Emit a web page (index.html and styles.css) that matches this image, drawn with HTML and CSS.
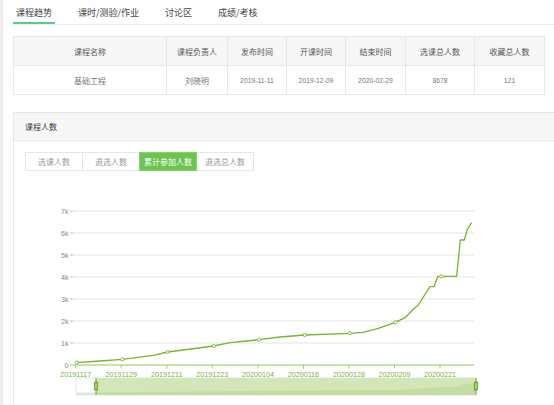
FILE: index.html
```html
<!DOCTYPE html>
<html lang="zh-CN">
  <head>
    <meta charset="UTF-8" />
    <meta name="viewport" content="width=device-width, initial-scale=1.0" />
    <title>课程趋势</title>
    <link rel="stylesheet" href="styles.css">
  </head>
  <body>
    <div class="page">
      <!-- tabs -->
      <div class="tabs">
        <span class="tab active">课程趋势</span>
        <span class="tab">课时/测验/作业</span>
        <span class="tab">讨论区</span>
        <span class="tab">成绩/考核</span>
      </div>

      <!-- course info -->
      <table class="info">
        <colgroup>
          <col style="width:153px">
          <col style="width:61px">
          <col style="width:59px">
          <col style="width:59px">
          <col style="width:60px">
          <col style="width:69px">
          <col style="width:70px">
        </colgroup>
        <tr>
          <th>课程名称</th>
          <th>课程负责人</th>
          <th>发布时间</th>
          <th>开课时间</th>
          <th>结束时间</th>
          <th>选课总人数</th>
          <th>收藏总人数</th>
        </tr>
        <tr>
          <td>基础工程</td>
          <td>刘晓明</td>
          <td class="num">2019-11-11</td>
          <td class="num">2019-12-09</td>
          <td class="num">2020-02-29</td>
          <td class="num">8678</td>
          <td class="num">121</td>
        </tr>
      </table>

      <!-- chart card -->
      <div class="card">
        <div class="card-head">课程人数</div>
        <div class="card-body">
          <div class="btn-group">
            <span class="btn">选课人数</span>
            <span class="btn">退选人数</span>
            <span class="btn active">累计参加人数</span>
            <span class="btn">退选总人数</span>
          </div>

          <svg class="chart" width="500" height="234" viewBox="25 170 500 234">
            <g class="grid">
              <line x1="73" y1="210" x2="474" y2="210" />
              <line x1="73" y1="232" x2="474" y2="232" />
              <line x1="73" y1="254" x2="474" y2="254" />
              <line x1="73" y1="276" x2="474" y2="276" />
              <line x1="73" y1="298" x2="474" y2="298" />
              <line x1="73" y1="320" x2="474" y2="320" />
              <line x1="73" y1="342" x2="474" y2="342" />
            </g>
            <g class="y-tick">
              <line x1="70" y1="210" x2="73" y2="210" />
              <line x1="70" y1="232" x2="73" y2="232" />
              <line x1="70" y1="254" x2="73" y2="254" />
              <line x1="70" y1="276" x2="73" y2="276" />
              <line x1="70" y1="298" x2="73" y2="298" />
              <line x1="70" y1="320" x2="73" y2="320" />
              <line x1="70" y1="342" x2="73" y2="342" />
              <line x1="70" y1="364" x2="73" y2="364" />
            </g>
            <g class="y-label">
              <text x="68.5" y="212.6">7k</text>
              <text x="68.5" y="234.6">6k</text>
              <text x="68.5" y="256.6">5k</text>
              <text x="68.5" y="278.6">4k</text>
              <text x="68.5" y="300.6">3k</text>
              <text x="68.5" y="322.6">2k</text>
              <text x="68.5" y="344.6">1k</text>
              <text x="68.5" y="366.6">0</text>
            </g>

            <line class="x-axis" x1="73" y1="364" x2="474" y2="364" />
            <g class="x-tick">
              <line x1="75.7" y1="364" x2="75.7" y2="367.5" />
              <line x1="121.2" y1="364" x2="121.2" y2="367.5" />
              <line x1="166.8" y1="364" x2="166.8" y2="367.5" />
              <line x1="212.3" y1="364" x2="212.3" y2="367.5" />
              <line x1="257.9" y1="364" x2="257.9" y2="367.5" />
              <line x1="303.4" y1="364" x2="303.4" y2="367.5" />
              <line x1="348.9" y1="364" x2="348.9" y2="367.5" />
              <line x1="394.5" y1="364" x2="394.5" y2="367.5" />
              <line x1="440" y1="364" x2="440" y2="367.5" />
            </g>
            <g class="x-label">
              <text x="75.7" y="375.5">20191117</text>
              <text x="121.2" y="375.5">20191129</text>
              <text x="166.8" y="375.5">20191211</text>
              <text x="212.3" y="375.5">20191223</text>
              <text x="257.9" y="375.5">20200104</text>
              <text x="303.4" y="375.5">20200116</text>
              <text x="348.9" y="375.5">20200128</text>
              <text x="394.5" y="375.5">20200209</text>
              <text x="440" y="375.5">20200221</text>
            </g>

            <polyline class="series" points="76.7,361.7 100,360 122.3,358.3 153.3,354.3 167.7,351 213.7,345 230,341.7 246.7,340 259,338.7 280,336 304.7,334 350,332.3 363.3,331.3 378.3,327.3 386.7,324.3 395.3,321.3 405,316.7 413.3,308.3 418.3,304 430,285.7 434,285.7 437.7,275.7 441.3,275.3 456.7,275.3 460.3,239 464.3,239 467.3,228.3 471.7,221.7" />
            <g class="dot">
              <circle cx="76.7" cy="361.7" r="1.6" />
              <circle cx="122.3" cy="358.3" r="1.6" />
              <circle cx="167.7" cy="351" r="1.6" />
              <circle cx="213.7" cy="345" r="1.6" />
              <circle cx="259" cy="338.7" r="1.6" />
              <circle cx="304.7" cy="334" r="1.6" />
              <circle cx="350" cy="332.3" r="1.6" />
              <circle cx="395.3" cy="321.3" r="1.6" />
              <circle cx="441.3" cy="275.3" r="1.6" />
            </g>

            <!-- data zoom slider -->
            <rect class="zoom-bg" x="76" y="377" width="400" height="17" />
            <polygon class="shadow-off" points="76.5,394 76.5,391.5 96,391.4 96,394" />
            <rect class="zoom-sel" x="96" y="377" width="380" height="17" />
            <polygon class="shadow-on" points="96,394 96,391.4 122.3,391.3 167.7,390.8 213.7,390.4 259,390 304.7,389.7 350,389.6 395.3,388.9 418.3,387.7 441.3,385.9 456.7,385.9 460.3,383.5 471.7,382.4 475.5,382.2 475.5,394" />
            <g class="handle">
              <line x1="96" y1="377" x2="96" y2="394" />
              <rect x="94.3" y="381" width="3.4" height="8" />
              <line x1="476" y1="377" x2="476" y2="394" />
              <rect x="474.3" y="381" width="3.4" height="8" />
            </g>
            <g class="grip">
              <line x1="95" y1="384" x2="97" y2="384" />
              <line x1="95" y1="386" x2="97" y2="386" />
              <line x1="475" y1="384" x2="477" y2="384" />
              <line x1="475" y1="386" x2="477" y2="386" />
            </g>
          </svg>
        </div>
      </div>
    </div>
  </body>
</html>
```

FILE: styles.css
```css
body {
  margin: 0;
  height: 405px;
  overflow: hidden;
  background: #eeeeee;
  font-family: "Noto Sans CJK SC", "Liberation Sans", sans-serif;
}

.page {
  margin-left: 3px;
  padding-left: 10px;
  height: 405px;
  overflow: hidden;
  background: #fff;
}

/* tabs */
.tabs {
  display: flex;
  align-items: flex-start;
  gap: 20px;
  height: 24px;
  border-bottom: 1px solid #eeeeee;
}
.tab {
  height: 18px;
  padding: 4px 3px 0;
  font-size: 9px;
  line-height: 18px;
  color: #444;
}
.tab.active {
  border-bottom: 2px solid #55d08c;
}

/* info table */
.info {
  margin-top: 11px;
  width: 531px;
  table-layout: fixed;
  border-collapse: collapse;
}
.info th,
.info td {
  height: 28px;
  padding: 0;
  border: 1px solid #e8e8e8;
  text-align: center;
  font-size: 8px;
  font-weight: normal;
}
.info th {
  background: #f7f7f7;
  color: #555;
}
.info td {
  color: #777;
}
.info td.num {
  font-family: "Liberation Sans", sans-serif;
  font-size: 6.8px;
}

/* card */
.card {
  margin-top: 17px;
  width: 560px;
  height: 293px;
  border: 1px solid #e8e8e8;
}
.card-head {
  height: 27px;
  padding-left: 11px;
  line-height: 27px;
  background: #f7f7f7;
  border-bottom: 1px solid #e8e8e8;
  font-size: 8px;
  color: #333;
}
.card-body {
  padding: 11px 11px 0;
}

.btn-group {
  display: flex;
}
.btn {
  box-sizing: border-box;
  width: 58px;
  height: 19px;
  line-height: 17px;
  text-align: center;
  font-size: 8px;
  color: #999;
  background: #fff;
  border: 1px solid #e6e6e6;
}
.btn + .btn {
  margin-left: -1px;
}
.btn.active {
  position: relative;
  color: #fff;
  background: #6cc551;
  border-color: #82d66d;
}

/* chart */
.chart {
  display: block;
}
.grid line {
  stroke: #e3e3e3;
  stroke-width: 1.1;
}
.y-tick line {
  stroke: #aaa;
  stroke-width: 0.8;
}
.y-label text {
  font-family: "Liberation Sans", sans-serif;
  font-size: 7.2px;
  fill: #888;
  text-anchor: end;
}
.x-axis {
  stroke: #93c75a;
  stroke-width: 1.2;
}
.x-tick line {
  stroke: #93c75a;
  stroke-width: 0.9;
}
.x-label text {
  font-family: "Liberation Sans", sans-serif;
  font-size: 7.2px;
  fill: #7cb342;
  text-anchor: middle;
}
.series {
  fill: none;
  stroke: #7ab32e;
  stroke-width: 1.3;
  stroke-linejoin: round;
}
.dot circle {
  fill: #fff;
  stroke: #7ab32e;
  stroke-width: 0.9;
}

.zoom-bg {
  fill: #fff;
  stroke: #dedede;
  stroke-width: 0.8;
}
.shadow-off {
  fill: #e3e3e3;
}
.zoom-sel {
  fill: #d2e6b8;
}
.shadow-on {
  fill: #c3dca2;
}
.handle line {
  stroke: #6fa92c;
  stroke-width: 1;
}
.handle rect {
  fill: #8cc556;
  stroke: #5e9a20;
  stroke-width: 0.7;
}
.grip line {
  stroke: #d8ecc4;
  stroke-width: 0.6;
}
```
